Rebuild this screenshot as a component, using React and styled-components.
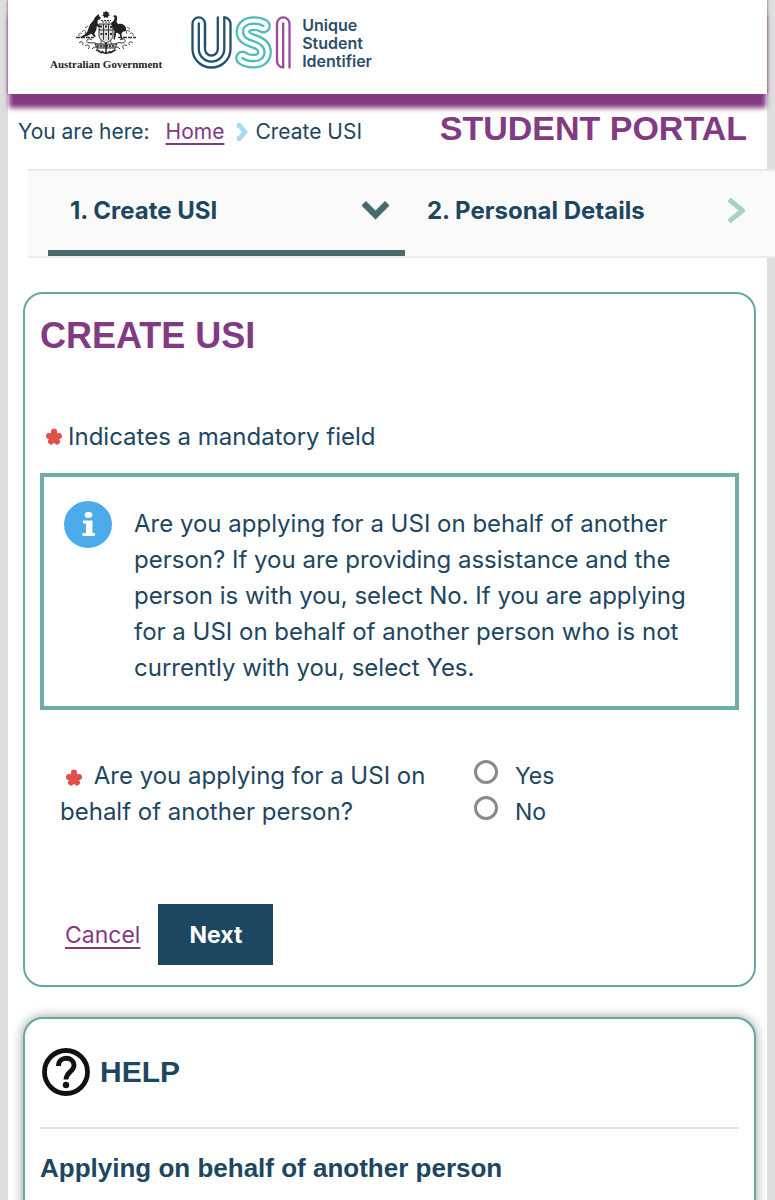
import React, { useState } from "react";
import styled, { createGlobalStyle } from "styled-components";

const GlobalStyle = createGlobalStyle`
  * {
    box-sizing: border-box;
  }
  body {
    margin: 0;
    background: #dedede;
    color: #1d4660;
    font-family: Inter, "Liberation Sans", sans-serif;
    font-size: 24px;
    line-height: 36px;
    overflow-x: hidden;
  }
`;

const Page = styled.div`
  margin: 0 8px;
  background: #fff;
`;

const Header = styled.header`
  display: flex;
  align-items: flex-start;
  gap: 29px;
  height: 94px;
  padding: 10px 42px 0;
  background: #fff;
  box-shadow: 0 15px 5px -1px #823a82, 0 0 3px #823a82;
`;

const Government = styled.div`
  display: flex;
  flex-direction: column;
  align-items: center;
  color: #222;
  font-family: "Liberation Serif", serif;
  font-size: 11px;
  font-weight: bold;
  line-height: 16px;
  white-space: nowrap;
`;

const UsiLogo = styled.div`
  display: flex;
  gap: 10px;
  padding-top: 6px;
`;

const UsiName = styled.div`
  color: #2b4d68;
  font-size: 16px;
  font-weight: 600;
  line-height: 18px;
`;

const TopLine = styled.div`
  display: flex;
  justify-content: space-between;
  height: 75px;
  padding: 15px 20px 0 10px;
`;

const Breadcrumb = styled.nav`
  display: flex;
  align-items: center;
  height: 46px;
  font-size: 21px;
  white-space: nowrap;
  svg {
    margin: 0 6px 0 12px;
  }
`;

const Link = styled.a`
  color: #823a82;
  text-decoration: underline;
  text-decoration-thickness: 2px;
  text-underline-offset: 4px;
`;

const HomeLink = styled(Link)`
  margin-left: 16px;
`;

const PortalTitle = styled.h1`
  margin: 0;
  color: #823a82;
  font-family: "Liberation Sans", Arial, sans-serif;
  font-size: 34px;
  line-height: 38px;
  white-space: nowrap;
`;

const Steps = styled.ol`
  display: grid;
  grid-template-columns: 1fr 1fr;
  margin: 0 -8px 34px 20px;
  padding: 0 13px 0 20px;
  list-style: none;
  background: #fafafa;
  border-top: 2px solid #e8e8e8;
  border-bottom: 2px solid #ebebeb;
`;

const Step = styled.li`
  display: flex;
  align-items: center;
  justify-content: space-between;
  height: 85px;
  padding: 0 16px 0 22px;
  border-bottom: 6px solid ${(props) => (props.$active ? "#4a6967" : "transparent")};
  font-size: 24px;
  font-weight: 700;
`;

const Panel = styled.section`
  margin: 0 11px 30px 15px;
  padding: 20px 15px;
  background: #fff;
  border: 2px solid #62a8a5;
  border-radius: 20px;
  box-shadow: ${(props) => (props.$raised ? "0 0 12px rgba(0, 0, 0, 0.4)" : "none")};
`;

const PanelTitle = styled.h2`
  margin: 0 0 61px;
  color: #823a82;
  font-family: "Liberation Sans", Arial, sans-serif;
  font-size: 36px;
  line-height: 44px;
`;

const Mandatory = styled.p`
  display: flex;
  align-items: center;
  gap: 4px;
  margin: 0 0 18px 4px;
`;

const InfoBox = styled.div`
  display: flex;
  align-items: flex-start;
  gap: 22px;
  padding: 24px 20px 20px;
  border: 4px solid #6fadab;
  svg {
    flex: none;
  }
  p {
    margin: 5px 0 0;
  }
`;

const Question = styled.fieldset`
  display: grid;
  grid-template-columns: 414px 1fr;
  margin: 48px 0 74px;
  padding: 0 20px;
  border: 0;
`;

const QuestionText = styled.div`
  padding-right: 40px;
  svg {
    margin: 0 3px 0 4px;
    vertical-align: -4px;
  }
`;

const Option = styled.label`
  display: flex;
  align-items: center;
  gap: 17px;
  font-size: 23px;
`;

const Radio = styled.input`
  appearance: none;
  width: 24px;
  height: 24px;
  margin: 0 0 8px;
  background: #fff;
  border: 3px solid #8a8a8e;
  border-radius: 50%;
  &:checked {
    border-width: 8px;
    border-color: #1d4660;
  }
`;

const Actions = styled.div`
  display: flex;
  align-items: center;
  gap: 18px;
  padding-left: 25px;
  font-size: 23px;
`;

const NextButton = styled.button`
  height: 61px;
  padding: 0 31px;
  background: #1d4660;
  border: 0;
  color: #fff;
  font: inherit;
  font-weight: 700;
`;

const HelpHeader = styled.div`
  display: flex;
  align-items: center;
  gap: 10px;
  height: 90px;
  margin-bottom: 21px;
  padding: 0 0 22px 2px;
  border-bottom: 2px solid #e2e2e2;
`;

const HelpTitle = styled.h2`
  margin: 0;
  font-family: "Liberation Sans", Arial, sans-serif;
  font-size: 30px;
`;

const HelpTopic = styled.h3`
  margin: 0 0 40px;
  font-family: "Liberation Sans", Arial, sans-serif;
  font-size: 26px;
`;

const Crest = () => (
  <svg width="62" height="46" viewBox="75 10 62 46" fill="none" stroke="#333" strokeWidth="1" aria-hidden="true">
    <path d="M106 10.5l1 1.800 2-.4-.6 2 1.600 1.300-1.900.8.1 2-2.200-.8-2.200.8.1-2-1.900-.8 1.600-1.300-.6-2 2 .4z" fill="#222" stroke="none" />
    <path d="M101 20.500h10M102 22h8" strokeDasharray="2 1" />
    <path d="M99 24h14v11c0 4-3 6-7 8-4-2-7-4-7-8z" fill="#ddd" />
    <path d="M99 30h14M103.500 24v16M108.500 24v16" />
    <path d="M100 26.500h2M105 26.500h2M110 27h2M100.500 34h2M105 34h2M110 34h2" strokeWidth="2" />
    <path d="M98.500 14l1 2.500 1.500 1.500-1.200 1.600-2 .4-.3 3 1.500 2.500 2.500.4-.2 1.200-3-.2-1.500-1-.5 4-2 3.500 1.500 3-1.500.6-3-3.600c-3 2-6 4-13 4.200 5-1.500 9-4 10-8.500.6-3.800 3-6.500 5.500-9.200l1-2.500z" fill="#222" stroke="none" />
    <path d="M113 16.200l2-1.100 1.800.8.300 2.700-.5 3.400 1.600 2.200c3-1.200 6.500.2 7.800 3.600l.3 3.200-3.600.8-1.300 2.200 1.500 5.500-1.600.2-1.700-5.500-3.200-1.800-1.500 7h-1.300l.8-8.500-2.300-4-1-4 3-2.600.6-3z" fill="#222" stroke="none" />
    <path d="M76 37.500h18M118 37.500h18" strokeWidth="1.500" strokeDasharray="4 1" />
    <path d="M92 40c-4-3-7 1-4 2.500s5-1 8 1 6 0 5-3M120 40c4-3 7 1 4 2.500s-5-1-8 1-6 0-5-3" />
    <path d="M79 43c3-3 6 1 3 2M85 46c3-3 6 1 3 3M92 49c3-4 7-1 4 2M133 43c-3-3-6 1-3 2M127 46c-3-3-6 1-3 3M120 49c-3-4-7-1-4 2" />
    <path d="M82 32c2-3 5-1 3 2M79 36c-1-3 2-4 3-2M130 32c-2-3-5-1-3 2M133 36c1-3-2-4-3-2M85 28l3-2M127 27l3 2" strokeWidth=".8" />
    <path d="M95 44h22l-2 4H97z" fill="#bbb" />
    <path d="M97 46h18" stroke="#222" strokeWidth="1.500" strokeDasharray="2 1" />
    <path d="M106 43v11M102 51c1 3 7 3 8 0M97 50l5 3M115 50l-5 3" stroke="#222" strokeWidth="1.500" />
  </svg>
);

// the S is a ribbon: wide stroke, white core, thin centre line
const sPath =
  "M263.500 26C260 24 257.500 23.700 254 23.700C247 23.700 243 27 243 31.800C243 37.500 248 39.500 254 41.300C261 43.500 264.500 46.500 264.500 52C264.500 58 260 61.200 253 61.200C248 61.200 245 60 242.500 58";

const UsiMark = () => (
  <svg width="101" height="54" viewBox="191 16 101 54" fill="none" strokeWidth="2.300" strokeLinecap="round" aria-hidden="true">
    <g stroke="#22506e">
      <path d="M205 46V23.700a6.200 6.200 0 0 0-12.500 0V49a19 18.500 0 0 0 38 0V23.700a6.200 6.200 0 0 0-6.200-6.200" />
      <path d="M198.800 23.500V49a12.700 12.500 0 0 0 25.500 0V17.500" />
      <path d="M205 23.700V49a6.400 6.500 0 0 0 12.800 0V17.500" />
    </g>
    <path d={sPath} stroke="#4dbdb5" strokeWidth="14.800" />
    <path d={sPath} stroke="#fff" strokeWidth="10.200" />
    <path d={sPath} stroke="#4dbdb5" />
    <path d="M289.500 67.500V23.700a6.200 6.200 0 0 0-12.500 0V61a6.200 6.200 0 0 0 6.200 6.300V23.500" stroke="#9c4a9c" />
  </svg>
);

const Star = () => (
  <svg width="20" height="20" viewBox="0 0 20 20" fill="none" stroke="#e2504c" strokeWidth="6" strokeLinecap="round" aria-hidden="true">
    <path d="M10 10V4.500M10 10l-5-1M10 10l5-1M10 10l-3 4.500M10 10l3 4.500" />
  </svg>
);

const InfoIcon = () => (
  <svg width="48" height="47" viewBox="0 0 48 47" aria-hidden="true">
    <ellipse cx="24" cy="23.500" rx="24" ry="23.500" fill="#4baae8" />
    <ellipse cx="24.500" cy="14" rx="4" ry="3" fill="#fff" />
    <path d="M19 19.500h9.500V32H31v3H18.500v-3H22v-9.500h-3z" fill="#fff" />
  </svg>
);

const HelpIcon = () => (
  <svg width="48" height="48" viewBox="0 0 48 48" fill="none" stroke="#111" strokeWidth="4.800" aria-hidden="true">
    <circle cx="24" cy="24" r="21.500" />
    <path d="M16.500 18c0-10.500 15.500-10 15.500-.5 0 6-8 6.500-8 14" />
    <circle cx="24" cy="37" r="3.200" fill="#111" stroke="none" />
  </svg>
);

function App() {
  const [answer, setAnswer] = useState("");

  return (
    <>
      <GlobalStyle />
      <Page>
        <Header>
          <Government>
            <Crest />
            Australian Government
          </Government>
          <UsiLogo>
            <UsiMark />
            <UsiName>
              Unique
              <br />
              Student
              <br />
              Identifier
            </UsiName>
          </UsiLogo>
        </Header>

        <TopLine>
          <Breadcrumb aria-label="Breadcrumb">
            You are here: <HomeLink href="#home">Home</HomeLink>
            <svg width="13" height="18" viewBox="0 0 13 18" fill="none" stroke="#a5dcf5" strokeWidth="5">
              <path d="M1 2.500h2.500l5.500 6.500-5.500 6.500H1" strokeLinejoin="round" />
            </svg>
            Create USI
          </Breadcrumb>
          <PortalTitle>STUDENT PORTAL</PortalTitle>
        </TopLine>

        <Steps>
          <Step $active>
            1. Create USI
            <svg width="27" height="19" viewBox="0 0 27 19" fill="none" strokeLinecap="square">
              <path d="M4 4.500l9.500 9.500L23 4.500" stroke="#8ccbe8" strokeWidth="7" />
              <path d="M4 4.500l9.500 9.500L23 4.500" stroke="#4a6967" strokeWidth="6" />
            </svg>
          </Step>
          <Step>
            2. Personal Details
            <svg width="19" height="27" viewBox="0 0 19 27" fill="none" stroke="#a9d0cd" strokeWidth="5">
              <path d="M2 2.500l13.500 11L2 24.500" strokeLinejoin="round" />
            </svg>
          </Step>
        </Steps>

        <Panel>
          <PanelTitle>CREATE USI</PanelTitle>
          <Mandatory>
            <Star />
            Indicates a mandatory field
          </Mandatory>
          <InfoBox>
            <InfoIcon />
            <p>
              Are you applying for a USI on behalf of another person? If you are providing assistance
              and the person is with you, select No. If you are applying for a USI on behalf of another
              person who is not currently with you, select Yes.
            </p>
          </InfoBox>
          <Question aria-labelledby="behalf">
            <QuestionText id="behalf">
              <Star /> Are you applying for a USI on behalf of another person?
            </QuestionText>
            <div>
              {["Yes", "No"].map((value) => (
                <Option key={value}>
                  <Radio
                    type="radio"
                    name="behalf"
                    value={value}
                    checked={answer === value}
                    onChange={() => setAnswer(value)}
                  />
                  {value}
                </Option>
              ))}
            </div>
          </Question>
          <Actions>
            <Link href="#cancel">Cancel</Link>
            <NextButton type="button">Next</NextButton>
          </Actions>
        </Panel>

        <Panel $raised>
          <HelpHeader>
            <HelpIcon />
            <HelpTitle>HELP</HelpTitle>
          </HelpHeader>
          <HelpTopic>Applying on behalf of another person</HelpTopic>
        </Panel>
      </Page>
    </>
  );
}

export default App;
